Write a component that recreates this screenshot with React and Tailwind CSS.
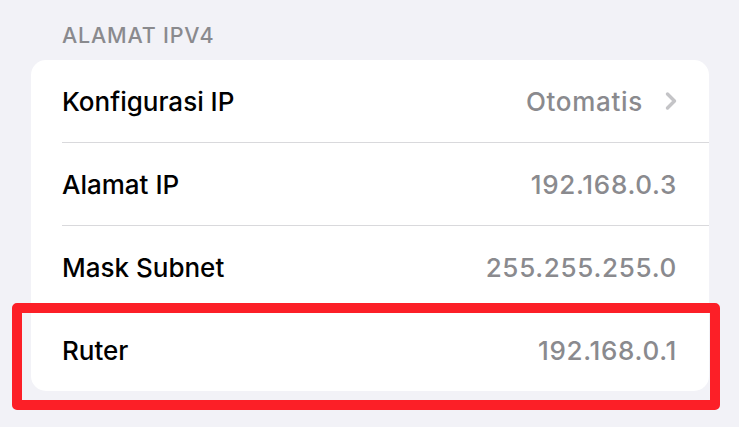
import React from 'react';

const rows = [
  { label: 'Konfigurasi IP', value: 'Otomatis', chevron: true },
  { label: 'Alamat IP', value: '192.168.0.3' },
  { label: 'Mask Subnet', value: '255.255.255.0' },
  { label: 'Ruter', value: '192.168.0.1' },
];

function Chevron() {
  return (
    <svg className="w-[12px] h-[20px] ml-[22px]" viewBox="0 0 12 20" fill="none">
      <path d="M2.5 3l7 7-7 7" stroke="#c4c4c7" strokeWidth={3.4} strokeLinecap="round" strokeLinejoin="round" />
    </svg>
  );
}

export default function App() {
  return (
    <div
      className="relative w-[739px] h-[427px] bg-[#f2f2f7] overflow-hidden"
      style={{ fontFamily: 'Inter, "Noto Sans", sans-serif' }}
    >
      {/* Section header */}
      <div className="pt-[21px] pl-[62px] h-[60px]">
        <div className="text-[21.5px] leading-[28px] font-medium text-[#8a8a8e] tracking-[0.8px]">ALAMAT IPV4</div>
      </div>

      {/* Grouped list */}
      <div className="ml-[31px] w-[678px] bg-white rounded-[15px] overflow-hidden">
        {rows.map((row, i) => (
          <div key={row.label} className="flex flex-col">
            {i > 0 && <div className="ml-[31px] h-px bg-[#d9d9dc]" />}
            <div className="flex items-center justify-between h-[82px] pl-[31px] pr-[32px]">
              <span className="text-[26px] font-medium text-black">{row.label}</span>
              <span className="flex items-center text-[26px] font-medium text-[#8a8a8e] tracking-[0.7px]">
                {row.value}
                {row.chevron && <Chevron />}
              </span>
            </div>
          </div>
        ))}
      </div>

      {/* Highlight box */}
      <div className="absolute left-[12px] top-[303px] w-[708px] h-[107px] border-[10px] border-[#fc1f27] rounded-[5px]" />
    </div>
  );
}
